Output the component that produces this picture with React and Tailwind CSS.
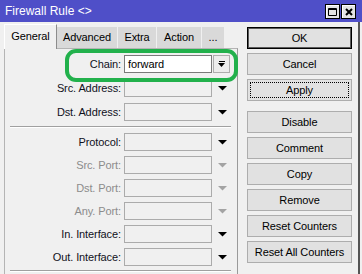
import React from 'react'

const font = "font-['Liberation_Sans',Arial,sans-serif]"

function Arrow({ dim }) {
  return (
    <svg width="9" height="5" viewBox="0 0 9 5">
      <path d="M0 0h9L4.5 4.5z" fill={dim ? '#a3a3a3' : '#000'} />
    </svg>
  )
}

function Row({ label, dim, value, chain }) {
  return (
    <div className="flex items-center h-[18px]">
      <div className={`w-[116px] text-right leading-none ${dim ? 'text-[#8c8c8c]' : 'text-[#10101c]'}`}>
        {label}
      </div>
      <div
        className={`ml-[3px] w-[88px] h-[18px] border flex items-center pl-[3px] ${
          chain ? 'bg-white border-[#7a7a7a]' : 'bg-[#f0f0f0] border-[#ababab]'
        }`}
      >
        {value}
      </div>
      {chain ? (
        <div className="ml-[1px] w-[17px] h-[18px] border border-[#adadad] bg-[#ececec] flex flex-col items-center justify-center gap-[1px]">
          <div className="w-[6px] h-[1px] bg-black" />
          <svg width="7" height="4" viewBox="0 0 7 4">
            <path d="M0 0h7L3.5 4z" fill="#000" />
          </svg>
        </div>
      ) : (
        <div className="ml-[1px] w-[18px] flex justify-center">
          <Arrow dim={dim} />
        </div>
      )}
    </div>
  )
}

function Sep() {
  return <div className="ml-[5px] mr-[6px] border-t border-[#a0a0a0] border-b border-b-white" />
}

function Btn({ children, def, focus, className = '' }) {
  return (
    <div
      className={`h-[22px] w-[105px] flex items-center justify-center bg-[#e1e1e1] border ${
        def ? 'border-black shadow-[inset_0_0_0_1px_#5a5a5a]' : 'border-[#adadad]'
      } relative ${className}`}
    >
      {focus && <div className="absolute inset-[2px] border border-dotted border-black" />}
      <span className="relative">{children}</span>
    </div>
  )
}

function TitleBtn({ children }) {
  return (
    <div className="w-[15px] h-[15px] bg-[#e4e4e4] border border-black shadow-[inset_1px_1px_0_#fff] flex items-center justify-center">
      {children}
    </div>
  )
}

export default function App() {
  return (
    <div className={`w-[362px] h-[274px] overflow-hidden bg-[#f0f0f0] text-[11px] tracking-[-0.1px] text-black relative ${font}`}>
      <div className="h-[22px] bg-[#4f4fc8] flex items-center justify-between pl-[5px] pr-[6px] text-white">
        <span className="text-[12px] tracking-normal">Firewall Rule &lt;&gt;</span>
        <div className="flex gap-[1px] mt-[1px]">
          <TitleBtn>
            <svg width="9" height="8" viewBox="0 0 9 8">
              <path d="M0.5 0.5h8v7h-8z" fill="none" stroke="#000" />
              <path d="M0 1.5h9" stroke="#000" />
            </svg>
          </TitleBtn>
          <TitleBtn>
            <svg width="8" height="8" viewBox="0 0 8 8">
              <path d="M1 1l6 6M7 1l-6 6" stroke="#000" strokeWidth="2" />
            </svg>
          </TitleBtn>
        </div>
      </div>

      <div className="flex h-[252px]">
        <div className="w-[358px] flex">
          <div className="pl-[4px] pt-[2px]">
            <div className="flex items-end h-[24px]">
              <div className="w-[53px] h-[25px] -mb-px relative z-10 bg-[#f0f0f0] border-l border-t border-r border-l-white border-t-white border-r-[#8c8c8c] flex items-center justify-center pb-[1px]">
                General
              </div>
              <div className="w-[60px] h-[21px] bg-[#d9d9d9] flex items-center justify-center">Advanced</div>
              <div className="ml-[1px] w-[38px] h-[21px] bg-[#d9d9d9] flex items-center justify-center">Extra</div>
              <div className="ml-[1px] w-[44px] h-[21px] bg-[#d9d9d9] flex items-center justify-center">Action</div>
              <div className="ml-[1px] w-[22px] h-[21px] bg-[#d9d9d9] flex items-center justify-center">...</div>
            </div>
            <div className="w-[234px] h-[240px] border-l border-t border-r border-l-[#b4b4b4] border-t-[#b4b4b4] border-r-[#9a9a9a] pt-[6px]">
              <div className="flex flex-col gap-[6px]">
                <Row label="Chain:" value="forward" chain />
                <Row label="Src. Address:" />
                <Row label="Dst. Address:" />
              </div>
              <div className="mt-[5px]">
                <Sep />
              </div>
              <div className="mt-[5px] flex flex-col gap-[5px]">
                <Row label="Protocol:" />
                <Row label="Src. Port:" dim />
                <Row label="Dst. Port:" dim />
                <Row label="Any. Port:" dim />
                <Row label="In. Interface:" />
                <Row label="Out. Interface:" />
              </div>
              <div className="mt-[4px]">
                <Sep />
              </div>
            </div>
          </div>

          <div className="ml-[9px] pt-[5px] flex flex-col gap-[4px]">
            <Btn def>OK</Btn>
            <Btn>Cancel</Btn>
            <Btn focus>Apply</Btn>
            <Btn className="mt-[6px]">Disable</Btn>
            <Btn>Comment</Btn>
            <Btn>Copy</Btn>
            <Btn>Remove</Btn>
            <Btn>Reset Counters</Btn>
            <Btn>Reset All Counters</Btn>
          </div>
        </div>
        <div className="w-[2px] bg-[#555]" />
      </div>

      <div className="absolute left-[65px] top-[49px] w-[173px] h-[33px] border-[4px] border-[#22b14c] rounded-[11px] pointer-events-none" />
    </div>
  )
}
